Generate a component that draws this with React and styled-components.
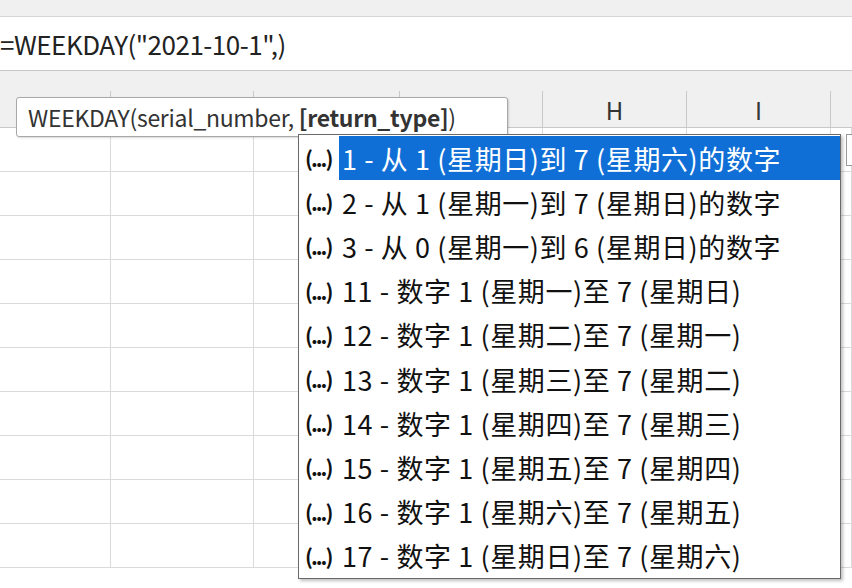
import React from "react";
import styled, { createGlobalStyle } from "styled-components";

const Global = createGlobalStyle`
  body { margin: 0; background: #fff; font-family: "Noto Sans CJK SC", "Noto Sans", sans-serif; }
`;

const Page = styled.div`
  width: 852px;
  height: 588px;
  overflow: hidden;
  position: relative;
  background: #fff;
`;

const TopBand = styled.div`
  height: 16px;
  background: #f0f0f0;
  border-bottom: 1px solid #d6d6d6;
`;

const FormulaBar = styled.div`
  height: 53px;
  display: flex;
  align-items: center;
  padding-left: 0;
  font-size: 26px;
  letter-spacing: -0.5px;
  color: #222;
  border-bottom: 1px solid #c8c8c8;
`;

const Gap = styled.div`
  height: 20px;
  background: #f0f0f0;
`;

const Header = styled.div`
  height: 36px;
  display: flex;
  background: #f0f0f0;
  border-bottom: 1px solid #c8c8c8;
`;

const HeadCell = styled.div`
  flex: 0 0 ${(p) => p.w}px;
  box-sizing: border-box;
  border-right: 1px solid #c8c8c8;
  display: flex;
  align-items: center;
  justify-content: center;
  font-size: 24px;
  color: #333;
`;

const Grid = styled.div`
  display: grid;
  grid-template-columns: 111px 143px 146px 143px 144px 144px 1fr;
  grid-auto-rows: 44px;
`;

const Cell = styled.div`
  border-right: 1px solid #dadada;
  border-bottom: 1px solid #dadada;
`;

const Tip = styled.div`
  position: absolute;
  left: 16px;
  top: 97px;
  width: 492px;
  height: 40px;
  box-sizing: border-box;
  background: #fff;
  border: 1px solid #a8a8a8;
  border-radius: 3px;
  box-shadow: 1px 1px 2px rgba(0,0,0,0.15);
  display: flex;
  align-items: center;
  padding-left: 11px;
  font-size: 23px;
  letter-spacing: -0.3px;
  color: #333;
  white-space: nowrap;
  b { font-weight: 700; }
`;

const Menu = styled.div`
  position: absolute;
  left: 298px;
  top: 134px;
  width: 543px;
  height: 445px;
  box-sizing: border-box;
  background: #fff;
  border: 1px solid #6a6a6a;
  box-shadow: 2px 2px 3px rgba(0,0,0,0.25);
  padding-top: 1px;
`;

const Item = styled.div`
  height: 44.2px;
  display: flex;
  align-items: center;
  padding-left: 6px;
  white-space: nowrap;
`;

const Dots = styled.span`
  font-size: 21px;
  font-weight: 700;
  letter-spacing: -2px;
  color: #111;
  width: 34px;
  flex: none;
`;

const Label = styled.span`
  flex: 1;
  height: 100%;
  display: flex;
  align-items: center;
  padding-left: 3px;
  font-size: 27px;
  letter-spacing: 0.6px;
  color: ${(p) => (p.active ? "#fff" : "#111")};
  background: ${(p) => (p.active ? "#0f6fd6" : "transparent")};
`;

const Edge = styled.div`
  position: absolute;
  left: 846px;
  top: 134px;
  width: 10px;
  height: 30px;
  border: 1px solid #999;
  background: #fff;
`;

const items = [
  "1 - 从 1 (星期日)到 7 (星期六)的数字",
  "2 - 从 1 (星期一)到 7 (星期日)的数字",
  "3 - 从 0 (星期一)到 6 (星期日)的数字",
  "11 - 数字 1 (星期一)至 7 (星期日)",
  "12 - 数字 1 (星期二)至 7 (星期一)",
  "13 - 数字 1 (星期三)至 7 (星期二)",
  "14 - 数字 1 (星期四)至 7 (星期三)",
  "15 - 数字 1 (星期五)至 7 (星期四)",
  "16 - 数字 1 (星期六)至 7 (星期五)",
  "17 - 数字 1 (星期日)至 7 (星期六)",
];

const cols = [
  { w: 111, l: "" }, { w: 143, l: "" }, { w: 146, l: "" }, { w: 143, l: "" },
  { w: 144, l: "H" }, { w: 144, l: "I" }, { w: 40, l: "" },
];

export default function App() {
  return (
    <Page>
      <Global />
      <TopBand />
      <FormulaBar>=WEEKDAY("2021-10-1",)</FormulaBar>
      <Gap />
      <Header>
        {cols.map((c, i) => (
          <HeadCell key={i} w={c.w}>{c.l}</HeadCell>
        ))}
      </Header>
      <Grid>
        {Array.from({ length: 70 }).map((_, i) => (
          <Cell key={i} />
        ))}
      </Grid>
      <Tip>
        WEEKDAY(serial_number,&nbsp;<b>[return_type]</b>)
      </Tip>
      <Edge />
      <Menu>
        {items.map((t, i) => (
          <Item key={i}>
            <Dots>(...)</Dots>
            <Label active={i === 0}>{t}</Label>
          </Item>
        ))}
      </Menu>
    </Page>
  );
}
